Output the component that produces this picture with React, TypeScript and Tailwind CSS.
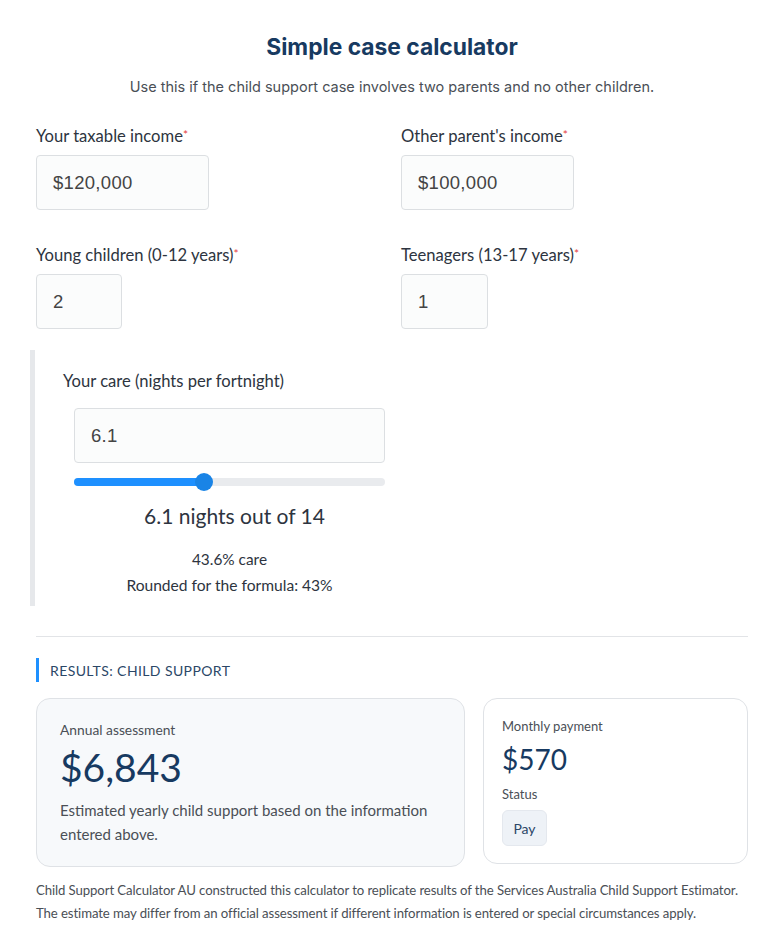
import React from "react";

const lato = { fontFamily: "Lato, 'Noto Sans', sans-serif" };

function Label({ children, required }: { children: React.ReactNode; required?: boolean }) {
  return (
    <div className="text-[16.6px] leading-[20px] text-[#2d3440]" style={lato}>
      {children}
      {required && <span className="text-[#e53e3e] relative -top-[3px] text-[12px]">*</span>}
    </div>
  );
}

function Input({ value, w }: { value: string; w: string }) {
  return (
    <div
      className={`${w} h-[55px] border border-[#dcdfe2] rounded-[4px] bg-[#fbfcfc] flex items-center px-[16px] text-[18.5px] tracking-[0.3px] text-[#444]`}
      style={{ fontFamily: "'Liberation Sans', Arial, sans-serif" }}
    >
      {value}
    </div>
  );
}

export default function App() {
  return (
    <div className="w-[784px] bg-white px-[36px] pt-[32px] pb-[20px]">
      <h1
        className="text-center text-[22.8px] leading-[30px] font-bold text-[#173a61]"
        style={{ fontFamily: "Inter, sans-serif" }}
      >
        Simple case calculator
      </h1>
      <p
        className="text-center text-[14.5px] leading-[20px] text-[#4a4f56] mt-[15px]"
        style={{ fontFamily: "Inter, sans-serif" }}
      >
        Use this if the child support case involves two parents and no other children.
      </p>

      <div className="grid grid-cols-2 gap-x-[18px] mt-[29px]">
        <div>
          <Label required>Your taxable income</Label>
          <div className="mt-[7px]">
            <Input value="$120,000" w="w-[173px]" />
          </div>
        </div>
        <div>
          <Label required>Other parent's income</Label>
          <div className="mt-[7px]">
            <Input value="$100,000" w="w-[173px]" />
          </div>
        </div>
        <div className="mt-[35px]">
          <Label required>Young children (0-12 years)</Label>
          <div className="mt-[7px]">
            <Input value="2" w="w-[86px]" />
          </div>
        </div>
        <div className="mt-[35px]">
          <Label required>Teenagers (13-17 years)</Label>
          <div className="mt-[7px]">
            <Input value="1" w="w-[87px]" />
          </div>
        </div>
      </div>

      <div className="-ml-[6px] mt-[21px] border-l-[5px] border-[#e6e8eb] w-[356px] pl-[28px] pt-[21px] pb-[11px]">
        <Label>Your care (nights per fortnight)</Label>
        <div className="pl-[11px] mt-[17px]">
          <Input value="6.1" w="w-[311px]" />
          <div className="relative w-[311px] h-[20px] mt-[9px]">
            <div className="absolute left-0 right-0 top-[6px] h-[8px] rounded-full bg-[#e9ebee]" />
            <div className="absolute left-0 top-[6px] h-[8px] w-[135px] rounded-full bg-[#1e90ff]" />
            <div className="absolute left-[121px] top-[1px] w-[18px] h-[18px] rounded-full bg-[#1a84e6]" />
          </div>
          <div className="w-[311px] text-center" style={lato}>
            <div className="text-[21px] leading-[24px] text-[#2d3440] mt-[12px] pl-[10px]">6.1 nights out of 14</div>
            <div className="text-[15.4px] leading-[20px] text-[#2d3440] mt-[21px]">43.6% care</div>
            <div className="text-[15.6px] leading-[20px] text-[#2d3440] mt-[6px]">Rounded for the formula: 43%</div>
          </div>
        </div>
      </div>

      <div className="border-t border-[#e2e4e7] mt-[30px]" />

      <div
        className="mt-[21px] border-l-[3px] border-[#1e90ff] pl-[11px] h-[24px] flex items-center text-[14px] tracking-[0.4px] text-[#2b4767]"
        style={lato}
      >
        RESULTS: CHILD SUPPORT
      </div>

      <div className="flex gap-[18px] items-start mt-[16px]" style={lato}>
        <div className="w-[429px] h-[169px] rounded-[14px] border border-[#dfe2e6] bg-[#f7f9fb] px-[23px] pt-[22px]">
          <div className="text-[13.8px] leading-[18px] text-[#4a4f56]">Annual assessment</div>
          <div className="text-[39px] leading-[44px] text-[#173a61] mt-[6px]">$6,843</div>
          <div className="text-[15px] leading-[24px] text-[#4a4f56] mt-[9px]">
            Estimated yearly child support based on the information entered above.
          </div>
        </div>
        <div className="flex-1 h-[166px] rounded-[14px] border border-[#dfe2e6] bg-white px-[18px] pt-[18px]">
          <div className="text-[13px] leading-[18px] text-[#4a4f56]">Monthly payment</div>
          <div className="text-[28px] leading-[34px] text-[#173a61] mt-[7px]">$570</div>
          <div className="text-[13px] leading-[18px] text-[#4a4f56] mt-[9px]">Status</div>
          <div className="mt-[7px] inline-flex items-center justify-center w-[45px] h-[36px] rounded-[6px] border border-[#e4e8ee] bg-[#eef2f7] text-[14px] text-[#2b4767]">
            Pay
          </div>
        </div>
      </div>

      <div className="mt-[12px] text-[13.2px] leading-[23px] text-[#4a4f56] tracking-[-0.1px]" style={lato}>
        <div className="whitespace-nowrap">Child Support Calculator AU constructed this calculator to replicate results of the Services Australia Child Support Estimator.</div>
        <div className="whitespace-nowrap">The estimate may differ from an official assessment if different information is entered or special circumstances apply.</div>
      </div>
    </div>
  );
}
